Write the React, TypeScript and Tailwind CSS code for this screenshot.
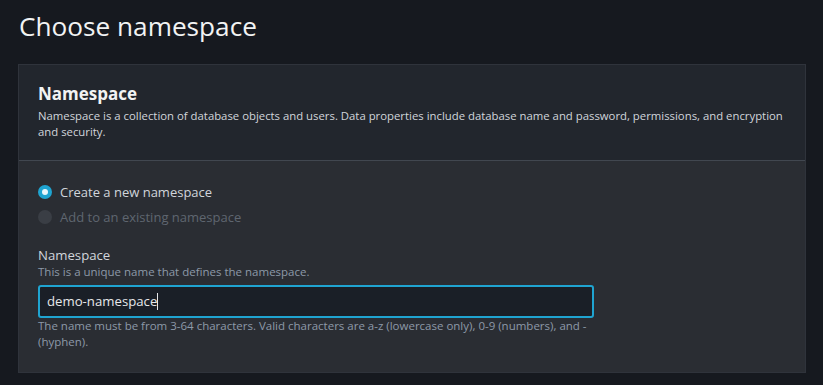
import React from 'react';

export default function App() {
  return (
    <div className="min-h-[385px] bg-[#16191f] font-['Open_Sans',sans-serif] pt-[6px] pl-[18px] pr-[17px]">
      <h1 className="text-[26.2px] leading-[40px] text-[#f2f3f3] pl-px mb-[18px]">Choose namespace</h1>

      <div className="border border-[#2f333b] bg-[#22262d]">
        {/* Header */}
        <div className="pl-[19px] pr-[14px] pt-[17px] pb-[20px] border-b border-[#414750]">
          <h2 className="text-[17px] leading-[24px] font-bold text-[#f2f3f3]">Namespace</h2>
          <p className="text-[11.35px] leading-[16px] text-[#d1d5db] mt-[2px]">
            Namespace is a collection of database objects and users. Data properties include database name and password, permissions, and encryption and security.
          </p>
        </div>

        {/* Body */}
        <div className="bg-[#2a2d33] px-[19px] pt-[23px] pb-[22px]">
          <div className="flex flex-col gap-[9px]">
            <label className="flex items-center gap-[8px]">
              <span className="w-[14px] h-[14px] rounded-full bg-[#1fa4d1] flex items-center justify-center">
                <span className="w-[6px] h-[6px] rounded-full bg-[#e9f7fc]" />
              </span>
              <span className="text-[13px] leading-[16px] text-[#d1d5db]">Create a new namespace</span>
            </label>
            <label className="flex items-center gap-[8px]">
              <span className="w-[14px] h-[14px] rounded-full bg-[#3a3e45]" />
              <span className="text-[13px] leading-[16px] text-[#5f6670]">Add to an existing namespace</span>
            </label>
          </div>

          <div className="mt-[21px] w-[556px]">
            <div className="text-[13.2px] leading-[18px] text-[#d1d5db]">Namespace</div>
            <div className="text-[11.5px] leading-[16px] text-[#8d99a8]">This is a unique name that defines the namespace.</div>
            <div className="mt-[5px] h-[33px] rounded-[3px] border-2 border-[#1fa4d1] bg-[#1a1f27] flex items-center pl-[7px]">
              <span className="text-[13.2px] text-[#e6e8ea]">demo-namespace</span>
              <span className="w-px h-[17px] bg-[#e6e8ea]" />
            </div>
            <p className="text-[11.5px] leading-[16px] text-[#8d99a8]">
              The name must be from 3-64 characters. Valid characters are a-z (lowercase only), 0-9 (numbers), and - (hyphen).
            </p>
          </div>
        </div>
      </div>
    </div>
  );
}
